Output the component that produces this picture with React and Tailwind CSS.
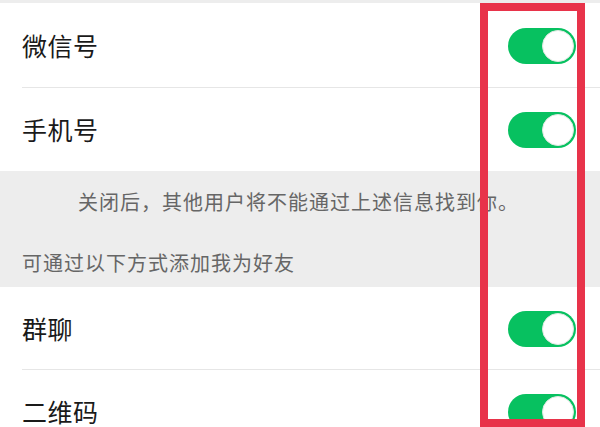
import React from 'react';

const Toggle = () => (
  <div className="w-[68px] h-[36px] rounded-full bg-[#07c160] flex items-center justify-end pr-[2px]">
    <div className="w-[32px] h-[32px] rounded-full bg-white border border-[#dfe8e2]" />
  </div>
);

const Row = ({ label, height, divider }) => (
  <div className={`${height} bg-white flex items-center pl-[22px] relative`}>
    <span className="text-[25px] text-[#1a1a1a] leading-none flex-1 tracking-[0.5px]">{label}</span>
    <div className="pr-[24px]">
      <Toggle />
    </div>
    {divider && <div className="absolute left-[22px] right-0 bottom-0 h-px bg-[#e6e6e6]" />}
  </div>
);

const App = () => {
  return (
    <div
      className="w-[600px] h-[427px] overflow-hidden relative bg-[#ededed]"
      style={{ fontFamily: '"Noto Sans CJK SC", "Noto Sans", sans-serif' }}
    >
      <div className="h-[3px]" />
      <Row label="微信号" height="h-[85px]" divider />
      <Row label="手机号" height="h-[83px]" />
      <div className="h-[116px] bg-[#ededed]">
        <div className="h-[62px] flex items-center pl-[78px] text-[20px] tracking-[1px] text-[#666666] whitespace-nowrap">
          关闭后，其他用户将不能通过上述信息找到你。
        </div>
        <div className="h-[54px] flex items-center pl-[22px] pt-[6px] text-[20px] tracking-[1px] text-[#666666]">
          可通过以下方式添加我为好友
        </div>
      </div>
      <Row label="群聊" height="h-[83px]" divider />
      <Row label="二维码" height="h-[83px]" />

      <div className="absolute left-[480px] top-[3px] w-[105px] h-[424px] border-[8px] border-[#e8334a]" />
    </div>
  );
};

export default App;
